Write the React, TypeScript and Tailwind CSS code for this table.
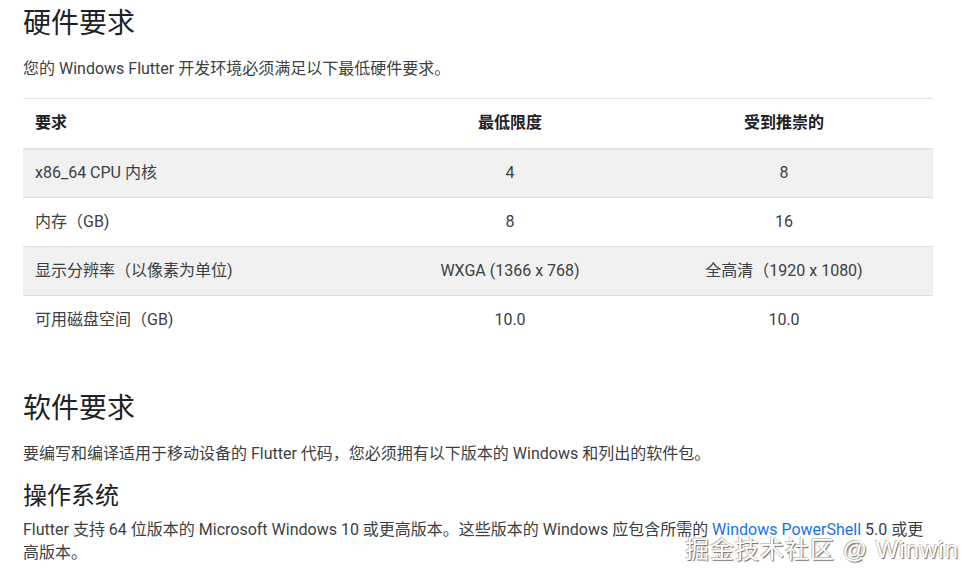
import React from 'react';

const rows = [
    { name: 'x86_64 CPU 内核', min: '4', rec: '8' },
    { name: '内存（GB)', min: '8', rec: '16' },
    { name: '显示分辨率（以像素为单位)', min: 'WXGA (1366 x 768)', rec: '全高清（1920 x 1080)' },
    { name: '可用磁盘空间（GB)', min: '10.0', rec: '10.0' },
];

export default function App() {
    return (
        <div
            className="relative w-[978px] h-[582px] overflow-hidden bg-white pl-[23px] text-[#3c4043]"
            style={{ fontFamily: 'Roboto, "Noto Sans CJK SC", sans-serif' }}
        >
            <h1 className="pt-[6px] text-[28px] leading-[36px] font-normal text-[#202124]">硬件要求</h1>
            <p className="mt-[15px] text-[16px] leading-[24px]">您的 Windows Flutter 开发环境必须满足以下最低硬件要求。</p>

            <table className="mt-[17px] w-[910px] table-fixed border-collapse text-[16px] text-[#3c4043]">
                <colgroup>
                    <col className="w-[362px]" />
                    <col className="w-[250px]" />
                    <col className="w-[298px]" />
                </colgroup>
                <thead>
                    <tr className="h-[50px] border-t border-[#e3e3e3] border-b-2 border-b-[#e3e3e3]">
                        <th className="pl-3 text-left font-bold text-[#202124]">要求</th>
                        <th className="text-center font-bold text-[#202124]">最低限度</th>
                        <th className="text-center font-bold text-[#202124]">受到推崇的</th>
                    </tr>
                </thead>
                <tbody>
                    {rows.map((r, i) => (
                        <tr
                            key={r.name}
                            className={`h-[49px] ${i < rows.length - 1 ? 'border-b border-[#dedede]' : ''} ${i % 2 === 0 ? 'bg-[#f1f1f1]' : 'bg-white'}`}
                        >
                            <td className="pl-3">{r.name}</td>
                            <td className="text-center">{r.min}</td>
                            <td className="text-center">{r.rec}</td>
                        </tr>
                    ))}
                </tbody>
            </table>

            <h2 className="mt-[46px] text-[28px] leading-[36px] font-normal text-[#202124]">软件要求</h2>
            <p className="mt-[15px] text-[16px] leading-[24px]">
                要编写和编译适用于移动设备的 Flutter 代码，您必须拥有以下版本的 Windows 和列出的软件包。
            </p>

            <h3 className="mt-[14px] text-[24px] leading-[32px] font-normal text-[#202124]">操作系统</h3>
            <p className="mt-[6px] text-[16px] leading-[23px]">
                <span className="whitespace-nowrap">
                    Flutter 支持 64 位版本的 Microsoft Windows 10 或更高版本。这些版本的 Windows 应包含所需的{' '}
                    <a className="text-[#1a73e8]">Windows PowerShell</a> 5.0 或更
                </span>
                <br />
                高版本。
            </p>

            {/* watermark */}
            <div
                className="absolute left-[685px] top-[537px] text-[24px] leading-[25px] tracking-[1px] text-white [text-shadow:1px_1px_1px_#6b6b6b,-1px_-1px_0_#c4c4c4]"
                style={{ fontFamily: '"Liberation Sans", "Noto Sans CJK SC", sans-serif' }}
            >
                掘金技术社区 @ Winwin
            </div>
        </div>
    );
}
